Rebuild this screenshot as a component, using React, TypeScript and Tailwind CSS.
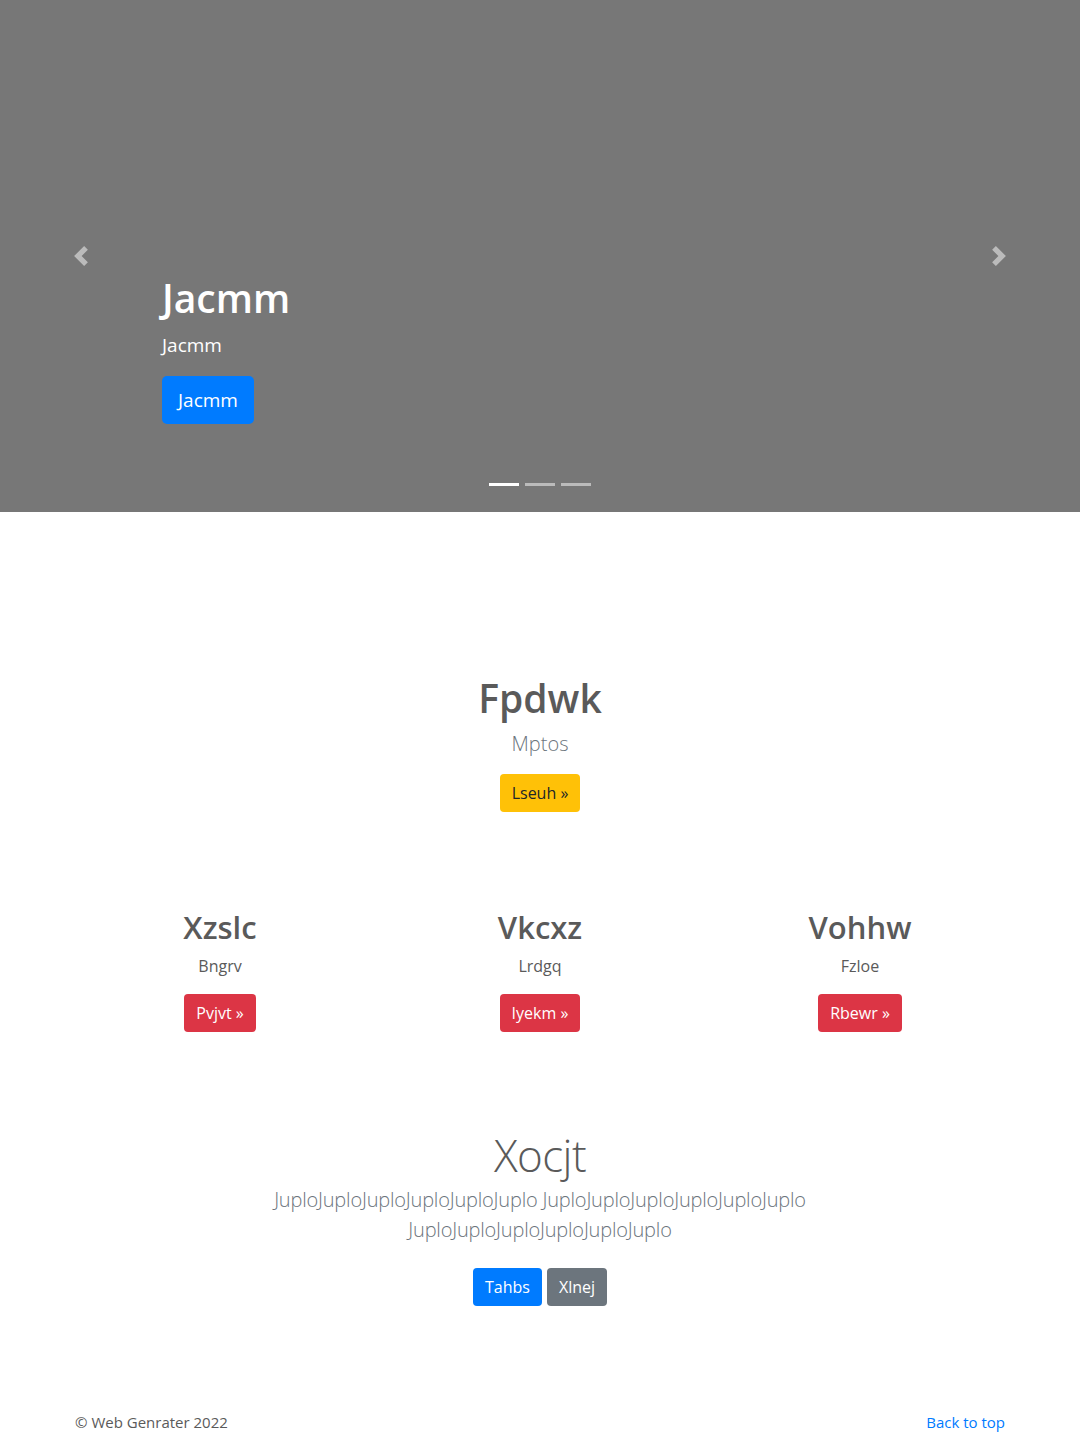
import React from "react";

const font = "font-['Open_Sans','Noto_Sans',sans-serif]";

function Chevron({ dir }: { dir: "left" | "right" }) {
	return (
		<svg width="20" height="20" viewBox="0 0 8 8" fill="#fff" className="opacity-50">
			{dir === "left" ? (
				<path d="M5.25 0l-4 4 4 4 1.5-1.5L4.25 4l2.5-2.5L5.25 0z" />
			) : (
				<path d="M2.75 0l-1.5 1.5L3.75 4l-2.5 2.5L2.75 8l4-4-4-4z" />
			)}
		</svg>
	);
}

function Feature({ title, text, cta }: { title: string; text: string; cta: string }) {
	return (
		<div className="flex flex-col items-center text-center px-[15px]">
			<h2 className="text-[31px] leading-[38px] font-semibold text-[#5a5a5a] mb-2">{title}</h2>
			<p className="text-base leading-6 text-[#5a5a5a] mb-4">{text}</p>
			<a className="rounded bg-[#dc3545] text-white text-base leading-6 px-3 py-[7px]">{cta} &raquo;</a>
		</div>
	);
}

export default function App() {
	return (
		<div className={`${font} w-full bg-white min-h-[1434px] flex flex-col`}>
			<div className="relative w-full h-[512px] bg-[#777777] flex flex-col justify-end px-[15%] pb-[88px]">
				<h1 className="text-[39px] leading-[48px] font-semibold text-white mb-2">Jacmm</h1>
				<p className="text-[19px] leading-[30px] text-white mb-4">Jacmm</p>
				<div>
					<a className="inline-block rounded-[5px] bg-[#007bff] text-white text-[19px] leading-[30px] px-4 py-[9px]">Jacmm</a>
				</div>
				<div className="absolute left-0 top-0 h-full w-[15%] flex items-center justify-center">
					<Chevron dir="left" />
				</div>
				<div className="absolute right-0 top-0 h-full w-[15%] flex items-center justify-center">
					<Chevron dir="right" />
				</div>
				<div className="absolute bottom-[26px] left-0 w-full flex justify-center gap-[6px]">
					<span className="w-[30px] h-[3px] bg-white" />
					<span className="w-[30px] h-[3px] bg-white/50" />
					<span className="w-[30px] h-[3px] bg-white/50" />
				</div>
			</div>

			<section className="flex flex-col items-center text-center pt-[162px]">
				<h1 className="text-[39px] leading-[48px] font-semibold text-[#5a5a5a] mb-[7px]">Fpdwk</h1>
				<p className="text-[20px] leading-[30px] font-light text-[#6c757d] mb-[15px]">Mptos</p>
				<a className="rounded bg-[#ffc107] text-[#212529] text-base leading-6 px-3 py-[7px]">Lseuh &raquo;</a>
			</section>

			<section className="w-[960px] mx-auto grid grid-cols-3 pt-[96px]">
				<Feature title="Xzslc" text="Bngrv" cta="Pvjvt" />
				<Feature title="Vkcxz" text="Lrdgq" cta="Iyekm" />
				<Feature title="Vohhw" text="Fzloe" cta="Rbewr" />
			</section>

			<section className="flex flex-col items-center text-center pt-[98px]">
				<h2 className="text-[44px] leading-[50px] font-light tracking-[-0.6px] text-[#5a5a5a] mb-[5px]">Xocjt</h2>
				<p className="max-w-[720px] text-[20px] leading-[30px] font-light tracking-[-0.2px] text-[#6c757d] mb-[23px]">
					JuploJuploJuploJuploJuploJuplo JuploJuploJuploJuploJuploJuplo JuploJuploJuploJuploJuploJuplo
				</p>
				<div className="flex gap-[5px]">
					<a className="rounded bg-[#007bff] text-white text-base leading-6 px-3 py-[7px]">Tahbs</a>
					<a className="rounded bg-[#6c757d] text-white text-base leading-6 px-3 py-[7px]">Xlnej</a>
				</div>
			</section>

			<footer className="mt-auto w-[960px] mx-auto px-[15px] flex justify-between text-[15px] leading-6">
				<p className="text-[#5a5a5a]">&copy; Web Genrater 2022</p>
				<a className="text-[#007bff]">Back to top</a>
			</footer>
		</div>
	);
}
